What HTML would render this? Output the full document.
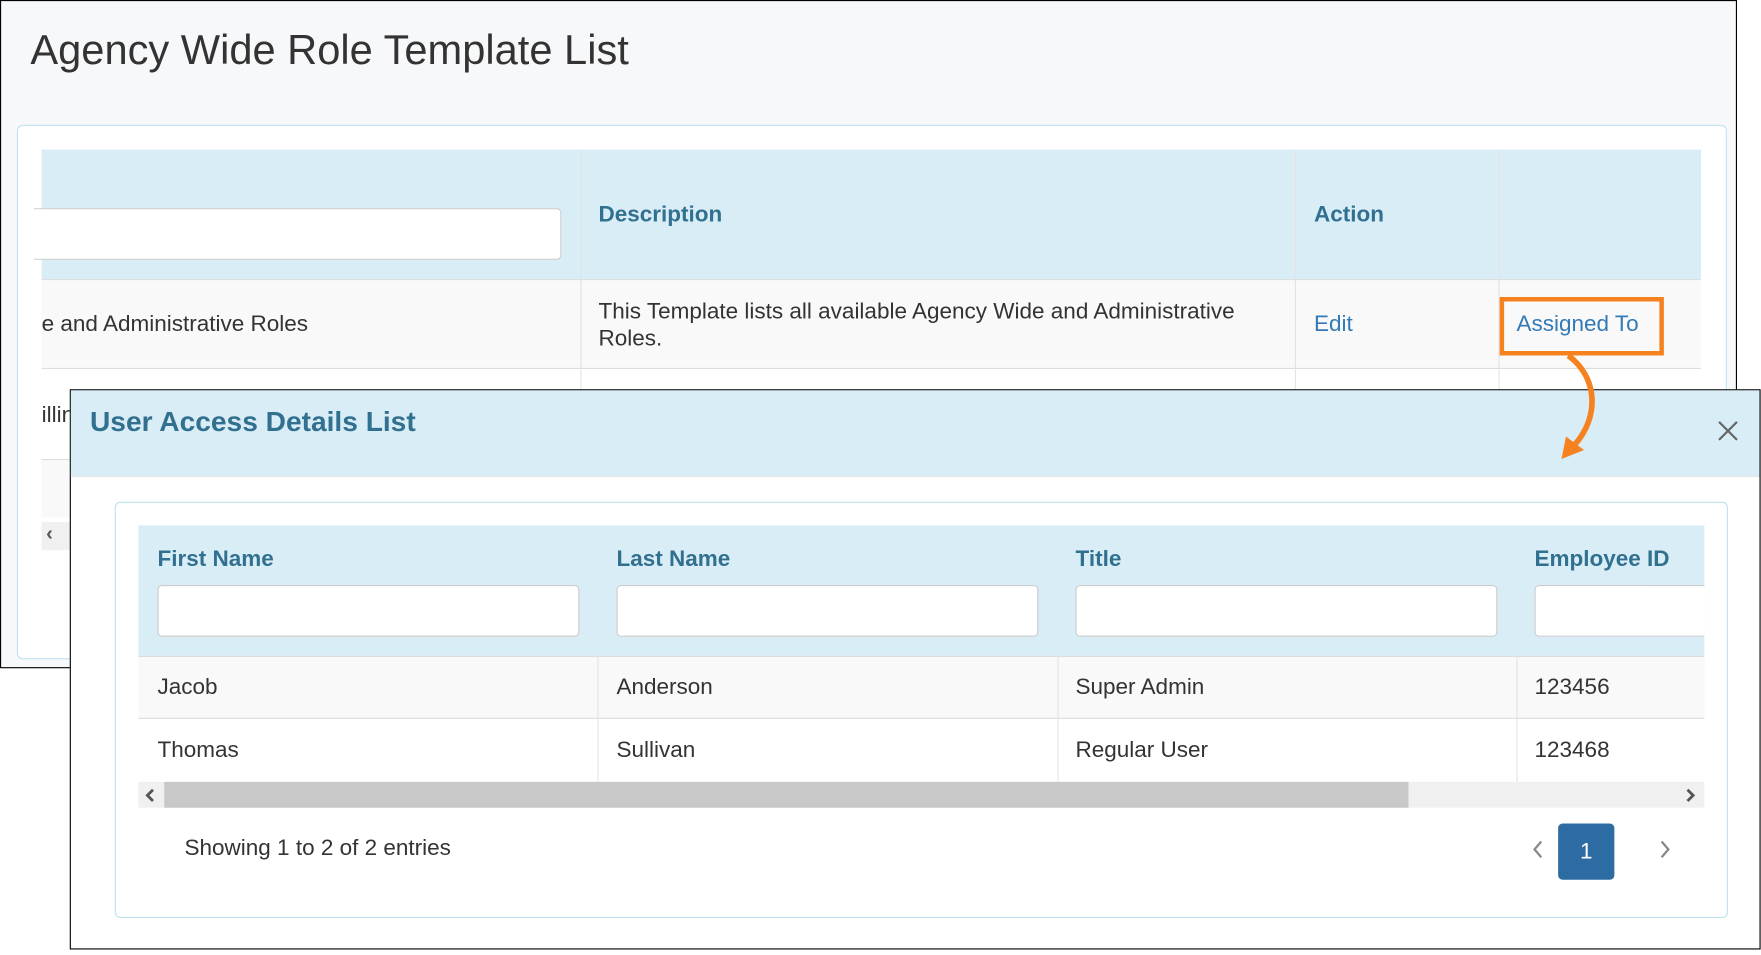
<!DOCTYPE html>
<html><head><meta charset="utf-8"><style>
*{box-sizing:border-box;margin:0;padding:0}
body{width:1761px;height:955px;overflow:hidden;background:#fff;font-family:"Liberation Sans",Arial,sans-serif;}
#s{position:absolute;left:0;top:0;width:1566px;height:849px;transform:scale(1.125);transform-origin:0 0;}
.a{position:absolute}
.t{font-size:20px;color:#333;white-space:nowrap}
.h{font-size:20px;font-weight:bold;color:#31708f;white-space:nowrap}
.inp{position:absolute;background:#fff;border:1px solid #ccc;border-radius:4px}
</style></head><body><div id="s">
<!-- back page -->
<div class="a" style="left:0;top:0;width:1544px;height:594px;border:1px solid #000;background:#f7f8fa"></div>
<div class="a" style="left:27px;top:24px;font-size:37px;color:#333;white-space:nowrap">Agency Wide Role Template List</div>
<div class="a" style="left:15px;top:111px;width:1520px;height:475px;background:#fff;border:1px solid #bfe3ee;border-radius:5px"></div>
<div class="a" style="left:37px;top:133px;width:1475px;height:115px;background:#d9edf7"></div>
<div class="inp" style="left:30px;top:185px;width:469px;height:46px;border-left:none;border-radius:0 4px 4px 0"></div>
<div class="a h" style="left:532px;top:180px">Description</div>
<div class="a h" style="left:1168px;top:180px">Action</div>
<div class="a" style="left:37px;top:248px;width:1475px;height:80px;background:#f9f9f9;border-top:1px solid #ddd;border-bottom:1px solid #ddd"></div>
<div class="a" style="left:516px;top:133px;width:1px;height:280px;background:#e3e3e3"></div>
<div class="a" style="left:1151px;top:133px;width:1px;height:280px;background:#e3e3e3"></div>
<div class="a" style="left:1332px;top:133px;width:1px;height:280px;background:#e3e3e3"></div>
<div class="a t" style="left:37px;top:277px">e and Administrative Roles</div>
<div class="a t" style="left:532px;top:265px;line-height:24px">This Template lists all available Agency Wide and Administrative<br>Roles.</div>
<div class="a t" style="left:1168px;top:277px;color:#337ab7">Edit</div>
<div class="a" style="left:1333px;top:264px;width:146px;height:52px;border:4px solid #f5821f"></div>
<div class="a t" style="left:1348px;top:277px;color:#337ab7">Assigned To</div>
<div class="a t" style="left:37px;top:358px">illin</div>
<div class="a" style="left:37px;top:408px;width:30px;height:52px;background:#f9f9f9;border-top:1px solid #ddd"></div>
<div class="a" style="left:37px;top:464px;width:30px;height:25px;background:#f0f0f0;font-size:18px;color:#555;padding-left:4px;font-weight:bold">‹</div>
<!-- modal -->
<div class="a" style="left:62px;top:346px;width:1503px;height:498px;border:1px solid #000;background:#fff"></div>
<div class="a" style="left:63px;top:347px;width:1501px;height:77px;background:#d9edf7;border-bottom:1px solid #e0e6ea"></div>
<div class="a" style="left:80px;top:361px;font-size:25px;font-weight:bold;color:#31708f;white-space:nowrap">User Access Details List</div>
<svg class="a" style="left:1526px;top:373px" width="20" height="20"><path d="M2 2L18 18M18 2L2 18" stroke="#666" stroke-width="2"/></svg>
<div class="a" style="left:102px;top:446px;width:1434px;height:370px;border:1px solid #bfe3ee;border-radius:5px"></div>
<div class="a" style="left:123px;top:467px;width:1392px;height:116px;background:#d9edf7"></div>
<div class="a h" style="left:140px;top:486px">First Name</div>
<div class="a h" style="left:548px;top:486px">Last Name</div>
<div class="a h" style="left:956px;top:486px">Title</div>
<div class="a h" style="left:1364px;top:486px">Employee ID</div>
<div class="inp" style="left:140px;top:520px;width:375px;height:46px"></div>
<div class="inp" style="left:548px;top:520px;width:375px;height:46px"></div>
<div class="inp" style="left:956px;top:520px;width:375px;height:46px"></div>
<div class="inp" style="left:1364px;top:520px;width:151px;height:46px;border-right:none;border-radius:4px 0 0 4px"></div>
<div class="a" style="left:123px;top:583px;width:1392px;height:56px;background:#f9f9f9;border-top:1px solid #ddd;border-bottom:1px solid #ddd"></div>
<div class="a" style="left:531px;top:583px;width:1px;height:112px;background:#e3e3e3"></div>
<div class="a" style="left:940px;top:583px;width:1px;height:112px;background:#e3e3e3"></div>
<div class="a" style="left:1348px;top:583px;width:1px;height:112px;background:#e3e3e3"></div>
<div class="a t" style="left:140px;top:600px">Jacob</div>
<div class="a t" style="left:548px;top:600px">Anderson</div>
<div class="a t" style="left:956px;top:600px">Super Admin</div>
<div class="a t" style="left:1364px;top:600px">123456</div>
<div class="a t" style="left:140px;top:656px">Thomas</div>
<div class="a t" style="left:548px;top:656px">Sullivan</div>
<div class="a t" style="left:956px;top:656px">Regular User</div>
<div class="a t" style="left:1364px;top:656px">123468</div>
<div class="a" style="left:123px;top:695px;width:1392px;height:23px;background:#f0f0f0"></div>
<div class="a" style="left:146px;top:695px;width:1106px;height:23px;background:#c8c8c8"></div>
<svg class="a" style="left:127px;top:700px" width="12" height="14"><path d="M9 2L4 7L9 12" stroke="#555" stroke-width="2.5" fill="none"/></svg>
<svg class="a" style="left:1497px;top:700px" width="12" height="14"><path d="M3 2L8 7L3 12" stroke="#555" stroke-width="2.5" fill="none"/></svg>
<div class="a t" style="left:164px;top:743px">Showing 1 to 2 of 2 entries</div>
<svg class="a" style="left:1361px;top:746px" width="12" height="18"><path d="M9 2L3 9L9 16" stroke="#888" stroke-width="2" fill="none"/></svg>
<div class="a" style="left:1385px;top:732px;width:50px;height:50px;background:#2d6ca2;border-radius:4px;color:#fff;font-size:20px;text-align:center;line-height:50px">1</div>
<svg class="a" style="left:1474px;top:746px" width="12" height="18"><path d="M3 2L9 9L3 16" stroke="#888" stroke-width="2" fill="none"/></svg>
<!-- arrow -->
<svg class="a" style="left:1380px;top:310px" width="60" height="110"><path d="M14 6 C40 25 42 60 20 85" stroke="#f5821f" stroke-width="5" fill="none"/><path d="M8 98 L12 78 L28 90 Z" fill="#f5821f"/></svg>
</div></body></html>
